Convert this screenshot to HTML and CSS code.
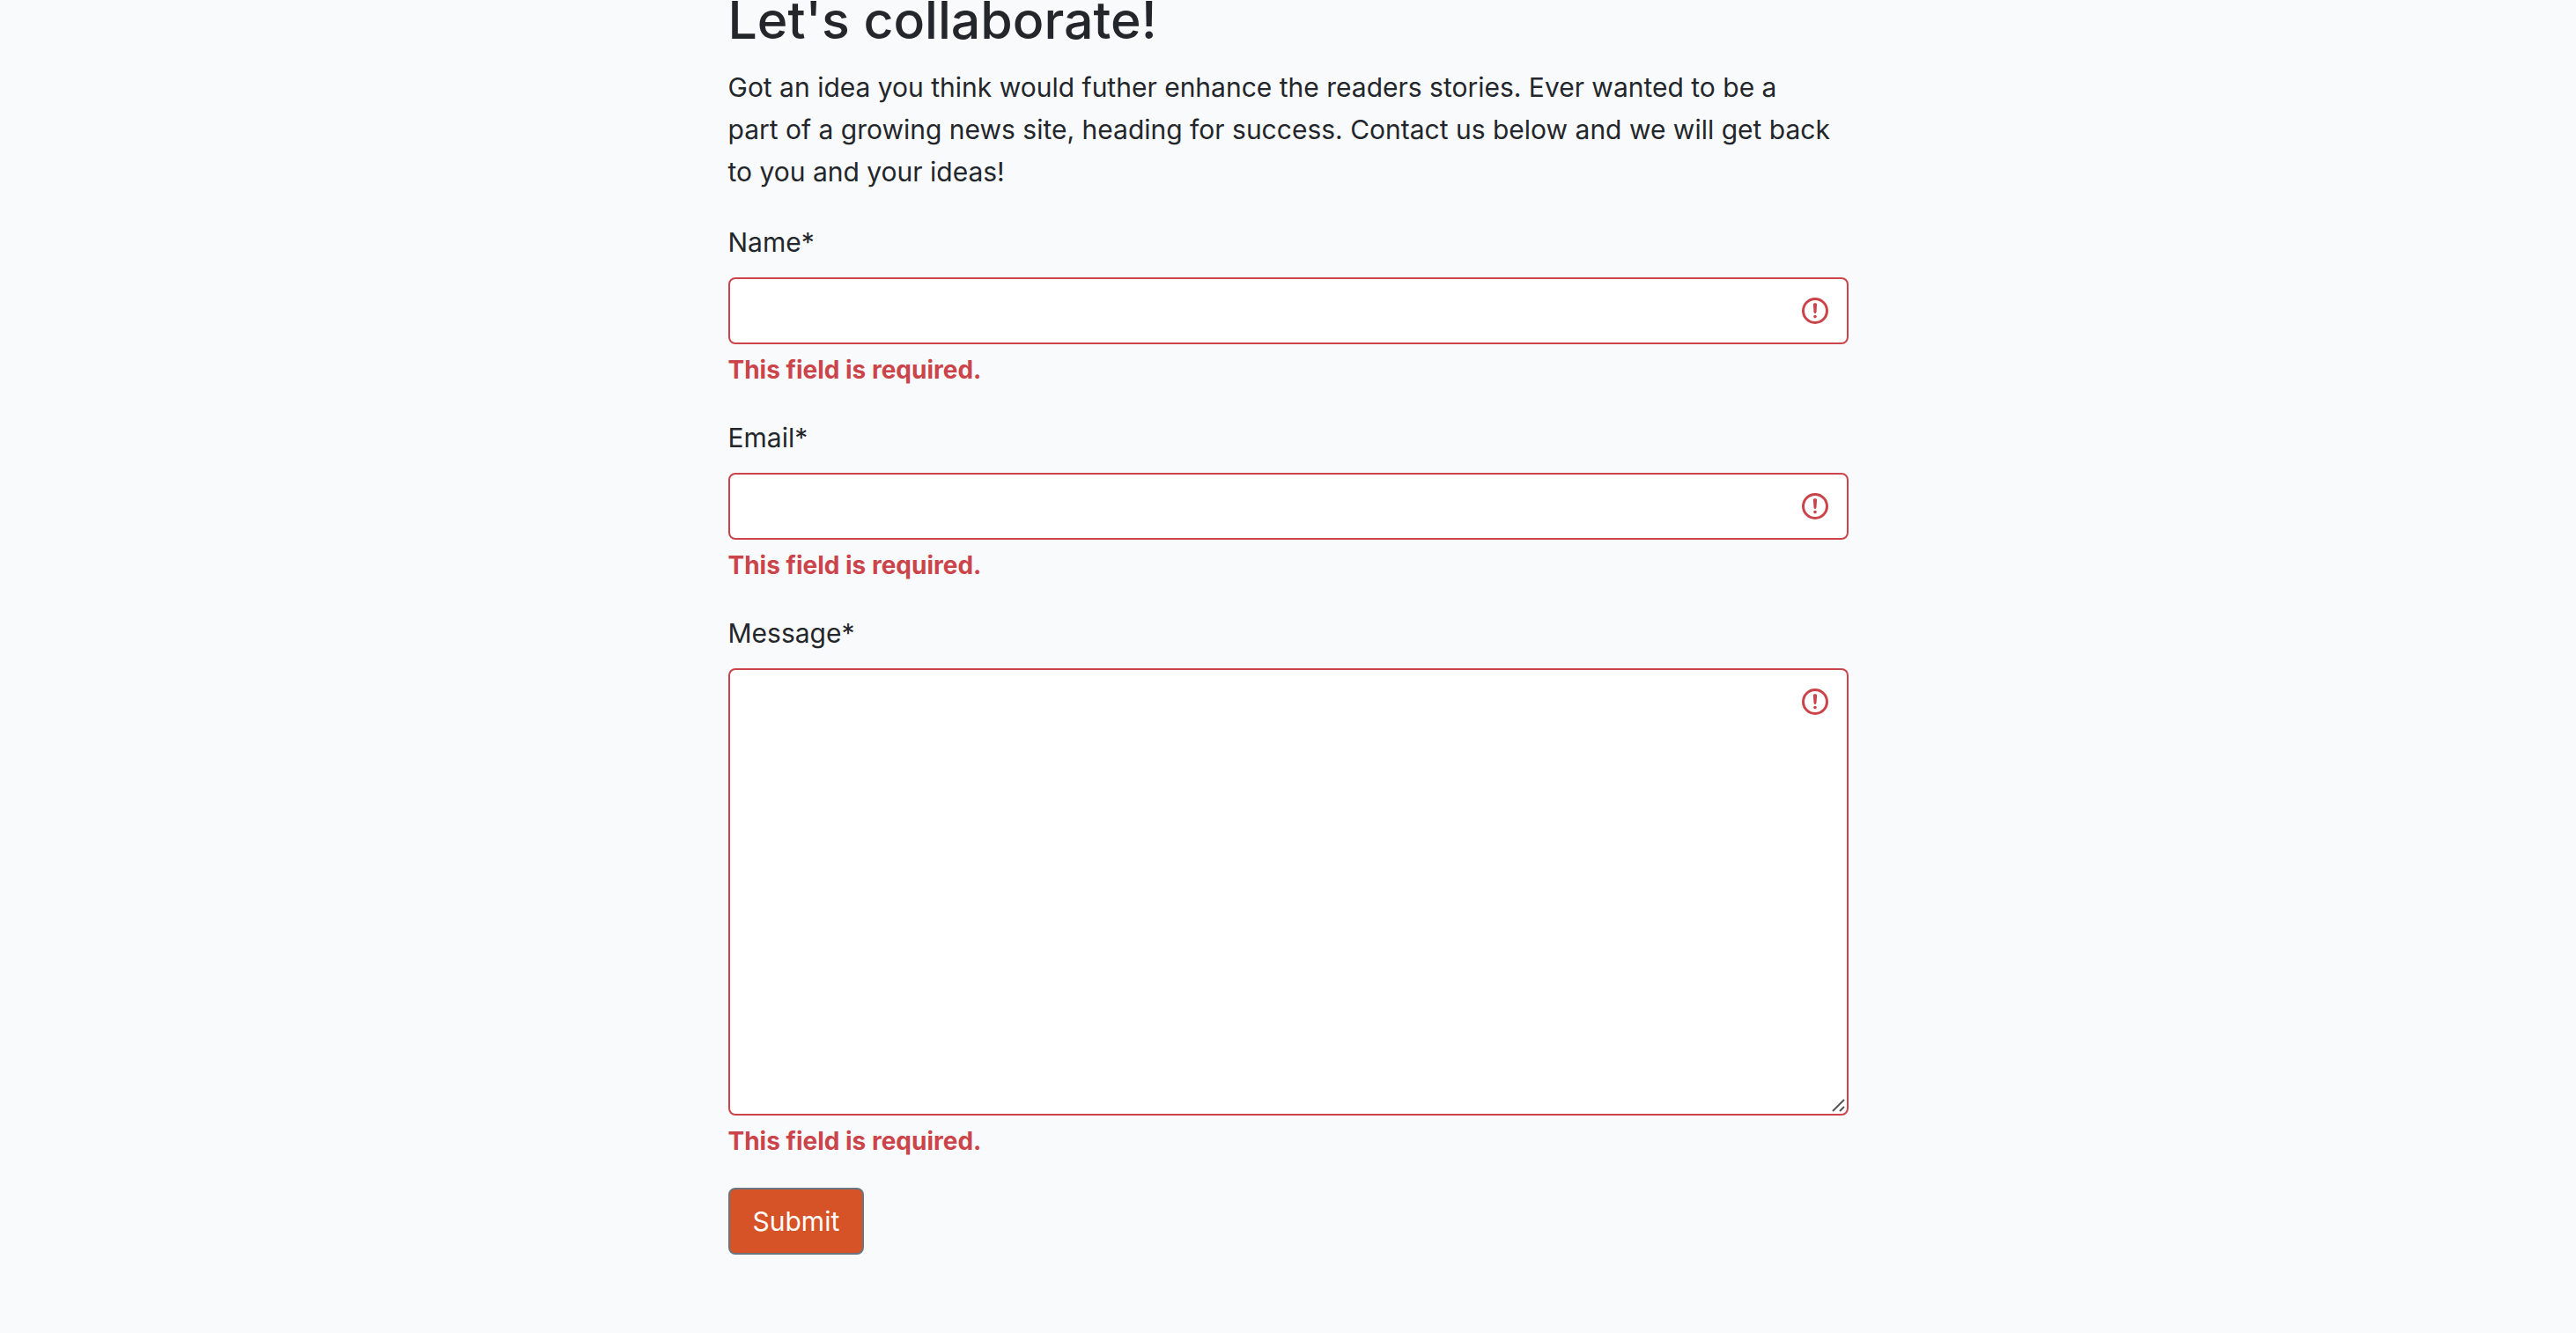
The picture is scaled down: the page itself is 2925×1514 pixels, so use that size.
FILE: index.html
```html
<!DOCTYPE html>
<html lang="en">
<head>
<meta charset="utf-8">
<title>Let's collaborate!</title>
<meta name="viewport" content="width=device-width, initial-scale=1">
<link rel="stylesheet" href="styles.css">
</head>
<body>
<svg class="sprite" aria-hidden="true">
  <symbol id="icon-invalid" viewBox="0 0 12 12">
    <circle cx="6" cy="6" r="4.5" fill="none" stroke="currentColor"/>
    <path d="M5.8 3.6h.4L6 6.5z" fill="none" stroke="currentColor" stroke-linejoin="round"/>
    <circle cx="6" cy="8.2" r=".6" fill="currentColor"/>
  </symbol>
</svg>
<main class="container">
  <section class="column">
    <h2 class="title">Let's collaborate!</h2>
    <p class="intro">Got an idea you think would futher enhance the readers stories. Ever wanted to be a<br>
      part of a growing news site, heading for success. Contact us below and we will get back<br>
      to you and your ideas!</p>
    <form class="form" novalidate>
      <div class="field">
        <label class="label" for="name">Name*</label>
        <div class="control-wrap">
          <input class="control" type="text" id="name" name="name" required aria-invalid="true" aria-describedby="name-error">
          <svg class="invalid-icon" aria-hidden="true"><use href="#icon-invalid"/></svg>
        </div>
        <strong class="error" id="name-error">This field is required.</strong>
      </div>
      <div class="field">
        <label class="label" for="email">Email*</label>
        <div class="control-wrap">
          <input class="control" type="email" id="email" name="email" required aria-invalid="true" aria-describedby="email-error">
          <svg class="invalid-icon" aria-hidden="true"><use href="#icon-invalid"/></svg>
        </div>
        <strong class="error" id="email-error">This field is required.</strong>
      </div>
      <div class="field">
        <label class="label" for="message">Message*</label>
        <div class="control-wrap">
          <textarea class="control" id="message" name="message" rows="10" required aria-invalid="true" aria-describedby="message-error"></textarea>
          <svg class="invalid-icon" aria-hidden="true"><use href="#icon-invalid"/></svg>
          <svg class="grip" viewBox="0 0 18 18" aria-hidden="true"><path d="M2 15 15 2M10 15l5-5"/></svg>
        </div>
        <strong class="error" id="message-error">This field is required.</strong>
      </div>
      <button class="submit" type="submit">Submit</button>
    </form>
  </section>
</main>
</body>
</html>
```
FILE: styles.css
```css
*, *::before, *::after { box-sizing: border-box; }

body {
  margin: 0;
  background: #f9fafc;
  color: #23262a;
  font: 400 30px/48px Inter, "Liberation Sans", sans-serif;
}

.sprite { display: none; }

.container {
  max-width: 2640px;
  margin: -13px auto 0;
  display: flex;
  justify-content: center;
}

.column {
  width: 50%;
  min-width: 640px;
  padding: 0 24px;
}

.title {
  margin: 0 0 16px;
  font-size: 59px;
  font-weight: 500;
  line-height: 72px;
}

.intro { margin: 0 0 32px; }

.form {
  display: flex;
  flex-direction: column;
  align-items: stretch;
  gap: 32px;
}

.field {
  display: flex;
  flex-direction: column;
}

.label { margin-bottom: 16px; }

.control-wrap {
  position: relative;
  display: flex;
}

.control {
  width: 100%;
  padding: 12px 72px 12px 24px;
  border: 2px solid #cb444a;
  border-radius: 8px;
  background: #fff;
  color: inherit;
  font: inherit;
}

textarea.control {
  resize: vertical;
  overflow: auto;
}

textarea.control::-webkit-resizer { background: transparent; }

.invalid-icon {
  position: absolute;
  top: 20px;
  right: 20px;
  width: 36px;
  height: 36px;
  color: #cb444a;
  pointer-events: none;
}

.grip {
  position: absolute;
  right: 2px;
  bottom: 2px;
  width: 18px;
  height: 18px;
  fill: none;
  stroke: #555;
  stroke-width: 2;
  pointer-events: none;
}

.error {
  margin-top: 8px;
  color: #cb444a;
  font-size: 28px;
  font-weight: 700;
  line-height: 42px;
}

.submit {
  align-self: flex-start;
  padding: 12px 26px;
  border: 2px solid #6c757d;
  border-radius: 8px;
  background: #d65328;
  color: #fff;
  font: inherit;
  cursor: pointer;
}
```
